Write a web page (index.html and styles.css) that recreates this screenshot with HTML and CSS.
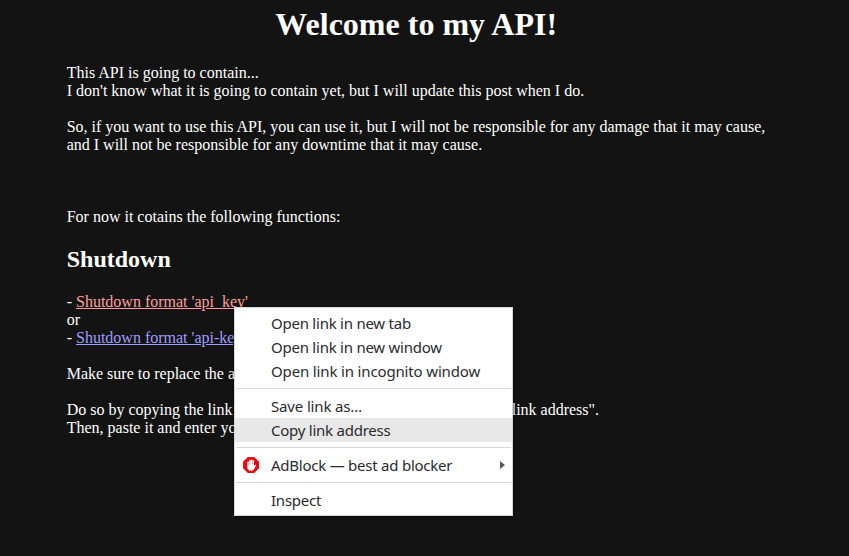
FILE: index.html
```
<!DOCTYPE html>
<html lang="en">
<head>
<meta charset="utf-8">
<title>Welcome to my API!</title>
<link rel="stylesheet" href="styles.css">
</head>
<body>
<main class="page">
  <h1>Welcome to my API!</h1>
  <p>This API is going to contain...<br>I don't know what it is going to contain yet, but I will update this post when I do.</p>
  <p>So, if you want to use this API, you can use it, but I will not be responsible for any damage that it may cause, and I will not be responsible for any downtime that it may cause.</p>
  <p class="intro">For now it cotains the following functions:</p>
  <h2>Shutdown</h2>
  <p>- <a class="visited" href="#">Shutdown format 'api_key'</a><br>or<br>- <a href="#">Shutdown format 'api-key'</a></p>
  <p>Make sure to replace the api_key</p>
  <p><span class="lead">Do so by copying the link</span>link address".<br>Then, paste it and enter your</p>
</main>
<div class="menu">
  <div class="item">Open link in new tab</div>
  <div class="item">Open link in new window</div>
  <div class="item wide">Open link in incognito window</div>
  <div class="sep"></div>
  <div class="item wide">Save link as…</div>
  <div class="item active">Copy link address</div>
  <div class="sep"></div>
  <div class="item">
    <svg class="icon" viewBox="0 0 16 16"><path fill="#e40d13" d="M4.8 0h6.4L16 4.8v6.4L11.2 16H4.8L0 11.2V4.8z"/><path fill="#fff" d="M4.3 5q.75-.6 1.5 0v3h.3V3.3q.7-.7 1.5 0v4.2h.2V2.7q.75-.7 1.5 0v4.8h.3V3.5q.7-.7 1.4 0v5.7l.8-1.1q.7-.7 1.4 0l-2.3 4.5Q10 13.8 8 13.6q-3.7 0-3.7-3.4z"/></svg>
    AdBlock — best ad blocker
    <svg class="arrow" viewBox="0 0 5 8"><path fill="#5a5a5a" d="M0 0l5 4-5 4z"/></svg>
  </div>
  <div class="sep"></div>
  <div class="item">Inspect</div>
</div>
</body>
</html>
```
FILE: styles.css
```
body {
  margin: 0;
  height: 556px;
  overflow: hidden;
  background: #131313;
  color: #fff;
  font: 16px/18px "Liberation Serif", serif;
}
.page { width: 699px; margin: 0 0 0 66.7px; padding-top: 6px; }
h1 { margin: 0 0 21px; font-size: 32px; line-height: 37px; text-align: center; }
h2 { margin: 20px 0; font-size: 24px; line-height: 27px; }
p { margin: 0 0 18px; }
.intro { margin-top: 54px; }
a { color: #9e9eff; }
a.visited { color: #ff9e9e; }
.lead { display: inline-block; width: 445px; }
.menu {
  position: absolute;
  left: 234px;
  top: 307px;
  box-sizing: border-box;
  width: 279px;
  height: 209px;
  padding: 3px 0;
  border: 1px solid #d6d6d6;
  background: #fff;
  color: #2b2b2e;
  font: 15px/24px "Noto Sans", sans-serif;
  box-shadow: 0 2px 5px rgba(0, 0, 0, .4);
}
.item {
  position: relative;
  height: 24px;
  padding-left: 36px;
  white-space: nowrap;
  letter-spacing: -.24px;
}
.wide { letter-spacing: -.15px; }
.active { background: #e8e8e8; }
.sep { height: 1px; margin: 5px 1px; background: #d8d8d8; }
.icon { position: absolute; left: 8px; top: 4px; width: 16px; height: 16px; }
.arrow { position: absolute; right: 7px; top: 8px; width: 5px; height: 8px; }
```
